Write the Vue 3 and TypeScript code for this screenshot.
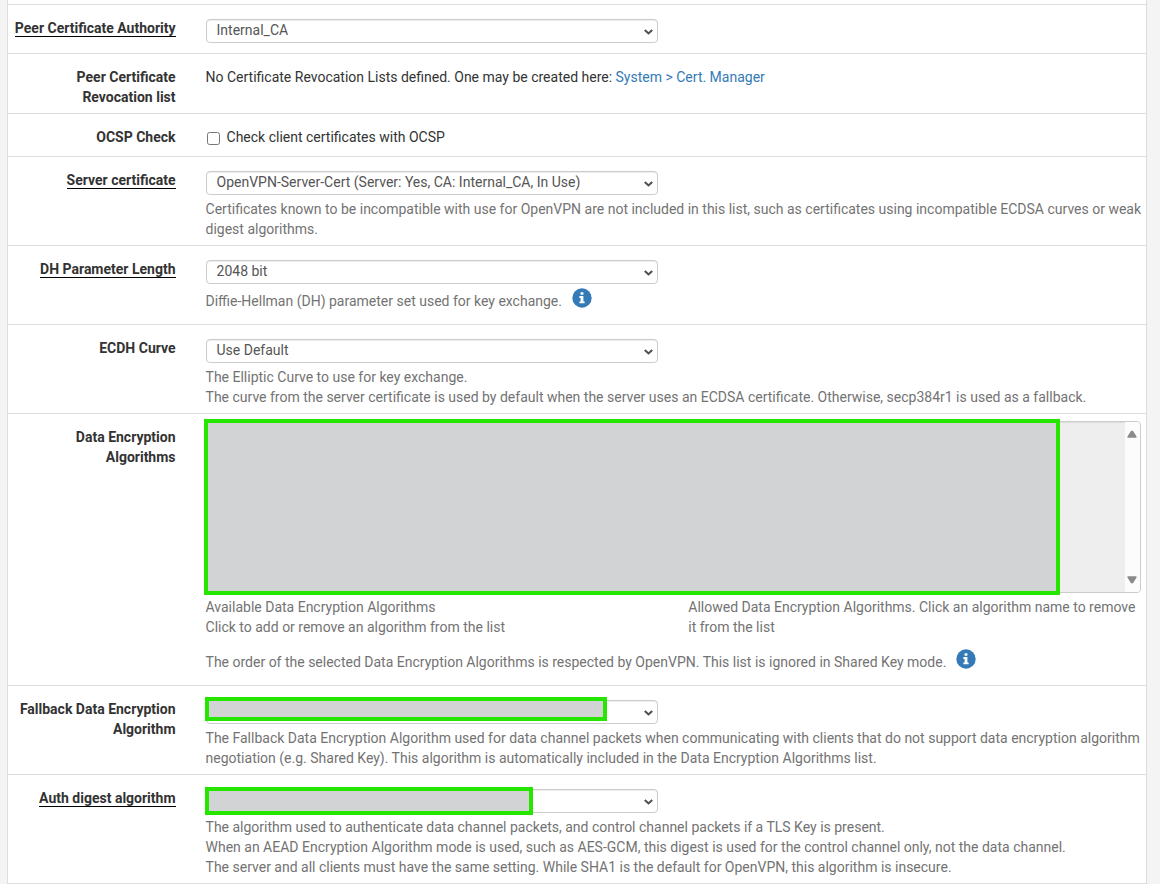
<script setup lang="ts">
import { ref } from 'vue'

const authority = ref('Internal_CA')
const serverCert = ref('OpenVPN-Server-Cert (Server: Yes, CA: Internal_CA, In Use)')
const dhLength = ref('2048 bit')
const curve = ref('Use Default')
const fallback = ref('')
const digest = ref('')
const ocsp = ref(false)
</script>

<template>
  <main class="page">
    <form class="panel" @submit.prevent>
      <div class="row">
        <label class="label" for="authority"><span class="required">Peer Certificate Authority</span></label>
        <div class="content">
          <select id="authority" v-model="authority" class="select">
            <option>Internal_CA</option>
          </select>
        </div>
      </div>

      <div class="row">
        <div class="label">Peer Certificate Revocation list</div>
        <div class="content plain">
          No Certificate Revocation Lists defined. One may be created here:
          <a href="#cert-manager">System &gt; Cert. Manager</a>
        </div>
      </div>

      <div class="row">
        <div class="label">OCSP Check</div>
        <div class="content plain">
          <label class="check">
            <input v-model="ocsp" type="checkbox" />
            <span>Check client certificates with OCSP</span>
          </label>
        </div>
      </div>

      <div class="row">
        <label class="label" for="server-cert"><span class="required">Server certificate</span></label>
        <div class="content">
          <select id="server-cert" v-model="serverCert" class="select">
            <option>OpenVPN-Server-Cert (Server: Yes, CA: Internal_CA, In Use)</option>
          </select>
          <p class="help">
            Certificates known to be incompatible with use for OpenVPN are not included in this list, such as
            certificates using incompatible ECDSA curves or weak digest algorithms.
          </p>
        </div>
      </div>

      <div class="row">
        <label class="label" for="dh-length"><span class="required">DH Parameter Length</span></label>
        <div class="content">
          <select id="dh-length" v-model="dhLength" class="select">
            <option>2048 bit</option>
          </select>
          <div class="help with-info">
            <span>Diffie-Hellman (DH) parameter set used for key exchange.</span>
            <button class="info" type="button" aria-label="More information">
              <svg viewBox="0 0 20 20" aria-hidden="true">
                <circle cx="10" cy="10" r="9.7" fill="#337ab7" />
                <path d="M8.6 4.2h2.8v2.5H8.6zM7.4 8.1h4v5.3h1.2v1.9H7.4v-1.9h1.2V10H7.4z" fill="#fff" />
              </svg>
            </button>
          </div>
        </div>
      </div>

      <div class="row">
        <label class="label" for="curve">ECDH Curve</label>
        <div class="content">
          <select id="curve" v-model="curve" class="select">
            <option>Use Default</option>
          </select>
          <p class="help">
            The Elliptic Curve to use for key exchange.<br />
            The curve from the server certificate is used by default when the server uses an ECDSA certificate.
            Otherwise, secp384r1 is used as a fallback.
          </p>
        </div>
      </div>

      <div class="row">
        <label class="label" for="algorithms">Data Encryption Algorithms</label>
        <div class="content">
          <div class="list">
            <select id="algorithms" class="listbox" multiple disabled></select>
            <div class="scrollbar">
              <svg viewBox="0 0 10 8" aria-hidden="true">
                <path d="M4.5 1.5h1L9 7H1z" fill="#8b8b8b" stroke="#8b8b8b" stroke-width="1.4" stroke-linejoin="round" />
              </svg>
              <svg viewBox="0 0 10 8" aria-hidden="true">
                <path d="M4.5 6.5h1L9 1H1z" fill="#8b8b8b" stroke="#8b8b8b" stroke-width="1.4" stroke-linejoin="round" />
              </svg>
            </div>
            <div class="mask mask-list"></div>
          </div>
          <div class="help columns">
            <p>
              Available Data Encryption Algorithms<br />
              Click to add or remove an algorithm from the list
            </p>
            <p>Allowed Data Encryption Algorithms. Click an algorithm name to remove it from the list</p>
          </div>
          <div class="help with-info order">
            <span>
              The order of the selected Data Encryption Algorithms is respected by OpenVPN. This list is ignored in
              Shared Key mode.
            </span>
            <button class="info" type="button" aria-label="More information">
              <svg viewBox="0 0 20 20" aria-hidden="true">
                <circle cx="10" cy="10" r="9.7" fill="#337ab7" />
                <path d="M8.6 4.2h2.8v2.5H8.6zM7.4 8.1h4v5.3h1.2v1.9H7.4v-1.9h1.2V10H7.4z" fill="#fff" />
              </svg>
            </button>
          </div>
        </div>
      </div>

      <div class="row">
        <label class="label" for="fallback">Fallback Data Encryption Algorithm</label>
        <div class="content">
          <div class="field">
            <select id="fallback" v-model="fallback" class="select">
              <option value=""></option>
            </select>
            <div class="mask mask-fallback"></div>
          </div>
          <p class="help">
            The Fallback Data Encryption Algorithm used for data channel packets when communicating with clients that
            do not support data encryption algorithm negotiation (e.g. Shared Key). This algorithm is automatically
            included in the Data Encryption Algorithms list.
          </p>
        </div>
      </div>

      <div class="row">
        <label class="label" for="digest"><span class="required">Auth digest algorithm</span></label>
        <div class="content">
          <div class="field">
            <select id="digest" v-model="digest" class="select">
              <option value=""></option>
            </select>
            <div class="mask mask-digest"></div>
          </div>
          <p class="help">
            The algorithm used to authenticate data channel packets, and control channel packets if a TLS Key is
            present.<br />
            When an AEAD Encryption Algorithm mode is used, such as AES-GCM, this digest is used for the control
            channel only, not the data channel.<br />
            The server and all clients must have the same setting. While SHA1 is the default for OpenVPN, this
            algorithm is insecure.
          </p>
        </div>
      </div>
    </form>
  </main>
</template>

<style>
body {
  margin: 0;
  background: #f4f4f4;
}
</style>

<style scoped>
.page {
  padding: 0 13px 0 7px;
  color: #333;
  font-family: Roboto, "Liberation Sans", sans-serif;
  font-size: 14px;
  line-height: 20px;
}

.page * {
  box-sizing: border-box;
}

.panel {
  padding-top: 4px;
  border: solid #ddd;
  border-width: 0 1px 1px;
  background: #fff;
}

.row {
  display: grid;
  grid-template-columns: 14.41% minmax(0, 1fr);
  gap: 30px;
  padding: 6px 5px;
  border-top: 1px solid #ddd;
}

.label {
  padding-top: 7px;
  font-weight: 700;
  text-align: right;
}

.required {
  border-bottom: 1px solid #000;
}

.plain {
  padding-top: 7px;
}

a {
  color: #337ab7;
  text-decoration: none;
}

.check {
  display: flex;
  align-items: flex-start;
  gap: 7px;
}

.check input {
  width: 13px;
  height: 13px;
  margin: 5px 0 5px 1px;
}

.select {
  display: block;
  width: calc(50% - 15px);
  height: 24px;
  margin: 8px 0 4px;
  padding: 0 20px 2px 10px;
  border: 1px solid #ccc;
  border-radius: 4px;
  appearance: none;
  background: #fff
    url("data:image/svg+xml,%3Csvg xmlns='http://www.w3.org/2000/svg' width='9' height='6'%3E%3Cpath d='M.8 1l3.7 3.4L8.2 1' fill='none' stroke='%23505050' stroke-width='2.1'/%3E%3C/svg%3E")
    no-repeat right 4px top 9px;
  box-shadow: inset 0 1px 1px rgba(0, 0, 0, 0.075);
  color: #555;
  font: inherit;
}

p {
  margin: 0;
}

.help {
  color: #737373;
}

p.help {
  margin-right: -2px;
}

.with-info {
  display: flex;
  align-items: flex-start;
  gap: 10px;
  padding: 3px 0 7px;
}

.order {
  margin-top: 12px;
}

.info {
  flex: none;
  width: 20px;
  height: 20px;
  margin-top: -3px;
  padding: 0;
  border: 0;
  background: none;
  cursor: pointer;
}

.info svg {
  display: block;
}

.columns {
  display: grid;
  grid-template-columns: 1fr 1fr;
  gap: 30px;
}

.list,
.field {
  position: relative;
}

.list {
  margin: 1px 0 4px;
}

.listbox {
  display: block;
  width: 100%;
  height: 172px;
  border: 1px solid #ccc;
  border-radius: 4px;
  background: #eee;
  box-shadow: inset 0 1px 1px rgba(0, 0, 0, 0.075);
  opacity: 1;
}

.scrollbar {
  position: absolute;
  top: 1px;
  right: 1px;
  bottom: 1px;
  display: flex;
  flex-direction: column;
  align-items: center;
  justify-content: space-between;
  width: 15px;
  padding: 8px 1px 8px 0;
  border-radius: 0 3px 3px 0;
  background: #fcfcfc;
}

.scrollbar svg {
  width: 10px;
  height: 8px;
}

.mask {
  position: absolute;
  border: 4px solid #26e600;
  background: #d1d3d5;
}

.mask-list {
  top: -2px;
  right: 81px;
  bottom: -2px;
  left: -2px;
}

.mask-fallback {
  top: -3px;
  left: -1px;
  width: 402px;
  height: 24px;
}

.mask-digest {
  top: -2px;
  left: -1px;
  width: 328px;
  height: 28px;
}
</style>
